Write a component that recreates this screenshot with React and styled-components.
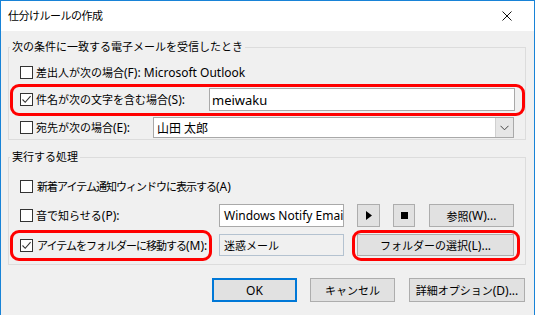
import styled, { createGlobalStyle } from "styled-components";

const Global = createGlobalStyle`
  * { box-sizing: border-box; }
  body {
    margin: 0;
    background: #ffffff;
  }
`;

const Window = styled.div`
  width: 535px;
  height: 315px;
  border: 1px solid #1883d7;
  border-bottom: none;
  background: #f0f0f0;
  font-family: "Noto Sans", "Noto Sans CJK JP", sans-serif;
  font-size: 11px;
  color: #000;
  overflow: hidden;
`;

const TitleBar = styled.div`
  height: 30px;
  background: #ffffff;
  display: flex;
  align-items: center;
  justify-content: space-between;
  padding: 0 22px 0 7px;
`;

const Title = styled.span`
  font-size: 11px;
  letter-spacing: -0.5px;
  line-height: 16px;
`;

const Body = styled.div`
  padding: 8px 8px 0 7px;
`;

const Group = styled.fieldset`
  margin: ${(p) => (p.$gap ? "9px 0 0" : "0")};
  padding: 0 10px ${(p) => p.$bottom}px 11px;
  border: 1px solid #dcdcdc;
  min-width: 0;
`;

const Legend = styled.legend`
  margin-left: -10px;
  padding: 0 2px;
  line-height: 16px;
`;

const Rows = styled.div`
  display: flex;
  flex-direction: column;
  padding-top: ${(p) => p.$top}px;
  gap: ${(p) => p.$gap}px;
`;

const Row = styled.div`
  display: flex;
  align-items: center;
  height: ${(p) => p.$h}px;
`;

const Marked = styled.div`
  position: relative;
  display: flex;
  align-items: center;
  align-self: stretch;
  margin-left: ${(p) => p.$ml || 0}px;
  &::after {
    content: "";
    position: absolute;
    left: ${(p) => p.$l}px;
    top: ${(p) => p.$t}px;
    right: ${(p) => p.$r}px;
    bottom: ${(p) => p.$b}px;
    border: 3px solid #ff0000;
    border-radius: 9px;
    pointer-events: none;
  }
`;

const CheckLabel = styled.label`
  display: flex;
  align-items: center;
  gap: 3px;
  flex: none;
  width: ${(p) => (p.$w ? `${p.$w}px` : "auto")};
  letter-spacing: ${(p) => (p.$tight ? "-1px" : "0")};
  white-space: nowrap;
`;

const Latin = styled.span`
  font-size: 12px;
  letter-spacing: 0;
  white-space: pre;
`;

const Box = styled.span`
  width: 13px;
  height: 13px;
  margin-right: ${(p) => (p.$tight ? 1 : 0)}px;
  border: 1px solid #333333;
  background: #ffffff;
  display: flex;
  align-items: center;
  justify-content: center;
  flex: none;
`;

const TextBox = styled.div`
  height: 100%;
  flex: ${(p) => (p.$w ? "none" : "1")};
  width: ${(p) => (p.$w ? `${p.$w}px` : "auto")};
  border: 1px solid ${(p) => (p.$readonly ? "#b4c2d0" : "#a9a9a9")};
  background: ${(p) => (p.$readonly ? "#f0f0f0" : "#ffffff")};
  display: flex;
  align-items: center;
  padding-left: ${(p) => (p.$w ? 4 : 2)}px;
  overflow: hidden;
  white-space: nowrap;
  font-size: ${(p) => p.$fs}px;
`;

const Combo = styled.div`
  flex: 1;
  height: 100%;
  margin-right: 1px;
  border: 1px solid #a9a9a9;
  background: #ffffff;
  display: flex;
  align-items: center;
  justify-content: space-between;
  padding: 0 0 0 3px;
  font-size: 12px;
`;

const DropButton = styled.span`
  width: 18px;
  height: 19px;
  background: #e6e6e6;
  border-left: 1px solid #d0d0d0;
  display: flex;
  align-items: center;
  justify-content: center;
`;

const Button = styled.button`
  width: ${(p) => p.$w}px;
  height: ${(p) => p.$h || 22}px;
  margin-left: ${(p) => p.$ml || 0}px;
  flex: none;
  background: #e1e1e1;
  border: ${(p) => (p.$default ? "2px solid #0078d7" : "1px solid #adadad")};
  font: inherit;
  color: #000;
  padding: 0;
  display: flex;
  align-items: center;
  justify-content: center;
`;

const Footer = styled.div`
  display: flex;
  justify-content: flex-end;
  gap: 13px;
  margin: 13px 1px 0 0;
`;

function Check({ checked, tight }) {
  return (
    <Box $tight={tight}>
      {checked && (
        <svg width="11" height="11" viewBox="0 0 11 11">
          <path d="M1.5 5.5 L4.2 8.3 L9.6 2.2" fill="none" stroke="#333" strokeWidth="1.1" />
        </svg>
      )}
    </Box>
  );
}

export default function App() {
  return (
    <>
      <Global />
      <Window>
        <TitleBar>
          <Title>仕分けルールの作成</Title>
          <svg width="10" height="10" viewBox="0 0 10 10">
            <path d="M0.5 0.5 L9.5 9.5 M9.5 0.5 L0.5 9.5" stroke="#111" strokeWidth="1" />
          </svg>
        </TitleBar>
        <Body>
          <Group $bottom={1}>
            <Legend>次の条件に一致する電子メールを受信したとき</Legend>
            <Rows $top={6} $gap={5}>
              <Row $h={22}>
                <CheckLabel>
                  <Check />
                  <span>
                    差出人が次の場合<Latin>(F): Microsoft Outlook</Latin>
                  </span>
                </CheckLabel>
              </Row>
              <Marked $l={-10} $t={-4} $r={-10} $b={-5}>
                <Row $h={23} style={{ flex: 1 }}>
                  <CheckLabel $w={189}>
                    <Check checked />
                    <span>
                      件名が次の文字を含む場合<Latin>(S):</Latin>
                    </span>
                  </CheckLabel>
                  <TextBox $fs={13}>meiwaku</TextBox>
                </Row>
              </Marked>
              <Row $h={21} style={{ marginTop: 1 }}>
                <CheckLabel $w={133}>
                  <Check />
                  <span>
                    宛先が次の場合<Latin>(E):</Latin>
                  </span>
                </CheckLabel>
                <Combo>
                  山田 太郎
                  <DropButton>
                    <svg width="9" height="6" viewBox="0 0 9 6">
                      <path d="M0.5 0.8 L4.5 4.8 L8.5 0.8" fill="none" stroke="#444" strokeWidth="1" />
                    </svg>
                  </DropButton>
                </Combo>
              </Row>
            </Rows>
          </Group>

          <Group $gap $bottom={8}>
            <Legend>実行する処理</Legend>
            <Rows $top={10} $gap={7}>
              <Row $h={22}>
                <CheckLabel $tight>
                  <Check tight />
                  <span>
                    新着アイテム通知ウィンドウに表示する<Latin>(A)</Latin>
                  </span>
                </CheckLabel>
              </Row>
              <Row $h={23}>
                <CheckLabel $w={199}>
                  <Check />
                  <span>
                    音で知らせる<Latin>(P):</Latin>
                  </span>
                </CheckLabel>
                <TextBox $w={125} $fs={12}>
                  Windows Notify Email
                </TextBox>
                <Button $w={23} $h={23} $ml={13}>
                  <svg width="6" height="9" viewBox="0 0 6 9">
                    <path d="M0 0 L6 4.5 L0 9 Z" fill="#000" />
                  </svg>
                </Button>
                <Button $w={22} $h={23} $ml={13}>
                  <svg width="7" height="7" viewBox="0 0 7 7">
                    <rect width="7" height="7" fill="#000" />
                  </svg>
                </Button>
                <Button $w={85} $h={23} $ml={14}>
                  参照<Latin>(W)...</Latin>
                </Button>
              </Row>
              <Row $h={22}>
                <Marked $l={-10} $t={-4} $r={7} $b={-5}>
                  <CheckLabel $w={199} $tight>
                    <Check checked tight />
                    <span>
                      アイテムをフォルダーに移動する<Latin>(M):</Latin>
                    </span>
                  </CheckLabel>
                </Marked>
                <TextBox $w={125} $readonly $fs={11}>
                  迷惑メール
                </TextBox>
                <Marked $l={-5} $t={-4} $r={-6} $b={-5} $ml={13}>
                  <Button $w={157}>
                    フォルダーの選択<Latin>(L)...</Latin>
                  </Button>
                </Marked>
              </Row>
            </Rows>
          </Group>

          <Footer>
            <Button $w={85} $h={24} $default>
              <Latin>OK</Latin>
            </Button>
            <Button $w={85} $h={24}>
              キャンセル
            </Button>
            <Button $w={116} $h={24} style={{ marginLeft: 1 }}>
              詳細オプション<Latin>(D)...</Latin>
            </Button>
          </Footer>
        </Body>
      </Window>
    </>
  );
}
